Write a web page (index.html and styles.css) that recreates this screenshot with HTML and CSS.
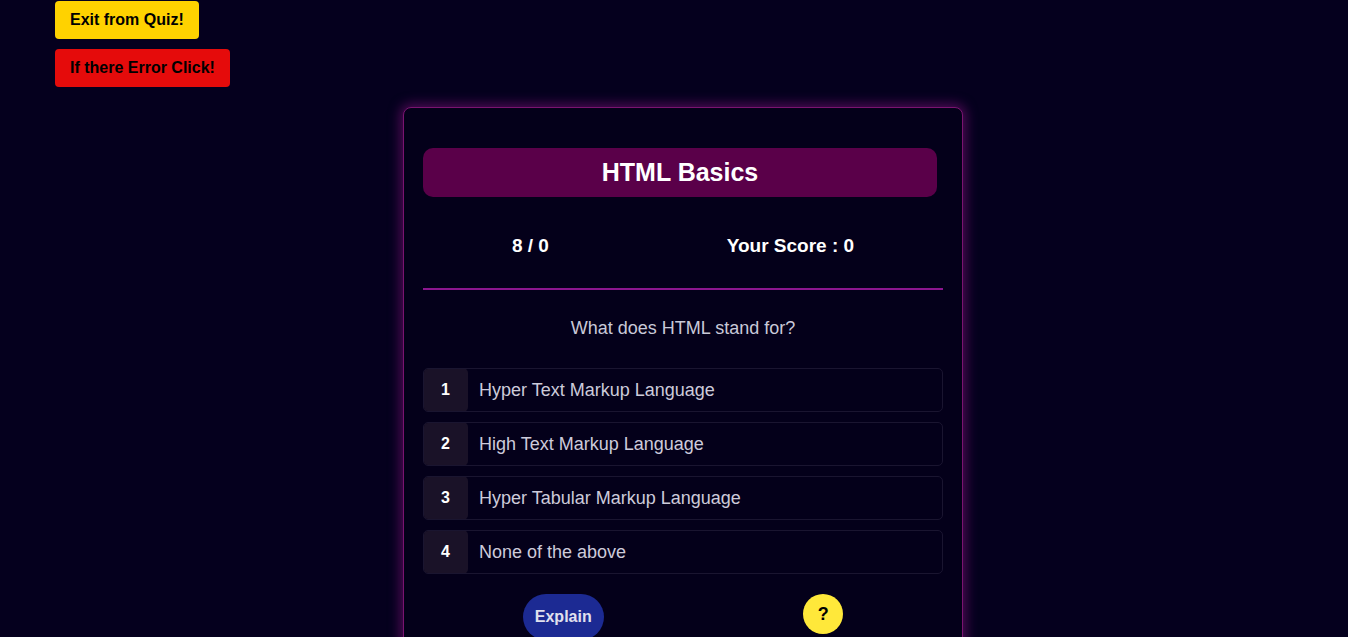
FILE: index.html
```html
<!DOCTYPE html>
<html>
<head>
<meta charset="utf-8">
<link rel="stylesheet" href="styles.css">
</head>
<body>
<div class="top-actions">
  <button class="btn btn-exit">Exit from Quiz!</button>
  <button class="btn btn-error">If there Error Click!</button>
</div>
<main class="card">
  <h1 class="title">HTML Basics</h1>
  <div class="stats">
    <span>8 / 0</span>
    <span>Your Score : 0</span>
  </div>
  <hr class="divider">
  <p class="question">What does HTML stand for?</p>
  <ul class="options">
    <li class="option"><span class="num">1</span><span class="text">Hyper Text Markup Language</span></li>
    <li class="option"><span class="num">2</span><span class="text">High Text Markup Language</span></li>
    <li class="option"><span class="num">3</span><span class="text">Hyper Tabular Markup Language</span></li>
    <li class="option"><span class="num">4</span><span class="text">None of the above</span></li>
  </ul>
  <div class="bottom">
    <button class="explain">Explain</button>
    <button class="help">?</button>
  </div>
</main>
</body>
</html>
```
FILE: styles.css
```css
* { box-sizing: border-box; }
html, body { margin: 0; padding: 0; }
body {
  background: #05001e;
  font-family: "Liberation Sans", Arial, sans-serif;
  height: 637px;
  overflow: hidden;
}
.top-actions {
  display: flex;
  flex-direction: column;
  align-items: flex-start;
  gap: 10px;
  padding: 1px 0 0 55px;
}
.btn {
  border: none;
  border-radius: 4px;
  height: 38px;
  padding: 0 15px;
  font-family: inherit;
  font-weight: bold;
  font-size: 16px;
  color: #000;
}
.btn-exit { background: #ffd200; }
.btn-error { background: #e50b0b; }
.card {
  width: 560px;
  margin: 20px 0 0 403px;
  background: #04001a;
  border-radius: 8px;
  border: 1px solid #7a1470;
  box-shadow: 0 0 12px 3px rgba(150, 20, 140, 0.5);
  padding: 40px 19px 40px;
}
.title {
  width: 514px;
  height: 49px;
  margin: 0;
  background: #5a0049;
  border-radius: 10px;
  color: #fff;
  font-size: 25px;
  font-weight: bold;
  display: flex;
  align-items: center;
  justify-content: center;
}
.stats {
  display: flex;
  justify-content: space-around;
  color: #fff;
  font-weight: bold;
  font-size: 19px;
  height: 91px;
  align-items: center;
  padding-top: 7px;
}
.divider {
  margin: 0;
  border: none;
  height: 2px;
  background: #8c168f;
}
.question {
  margin: 28px 0 0;
  text-align: center;
  color: #c9c9d8;
  font-size: 18px;
  line-height: 20px;
}
.options {
  list-style: none;
  margin: 30px 0 0;
  padding: 0;
  display: flex;
  flex-direction: column;
  gap: 10px;
}
.option {
  display: flex;
  height: 44px;
  border: 1px solid #1a1530;
  border-radius: 5px;
  overflow: hidden;
}
.num {
  width: 45px;
  margin: -1px 0 -1px -1px;
  background: #1a1228;
  border-radius: 5px;
  color: #fff;
  font-weight: bold;
  font-size: 16px;
  display: flex;
  align-items: center;
  justify-content: center;
}
.text {
  display: flex;
  align-items: center;
  padding-left: 11px;
  color: #cdcbda;
  font-size: 18px;
}
.bottom {
  display: flex;
  justify-content: space-around;
  margin-top: 20px;
}
.explain {
  width: 81px;
  height: 46px;
  border: none;
  border-radius: 23px;
  background: #1c2a93;
  color: #e0e0ee;
  font-family: inherit;
  font-weight: bold;
  font-size: 16px;
}
.help {
  width: 40px;
  height: 40px;
  border: none;
  border-radius: 50%;
  background: #ffe83a;
  color: #000;
  font-family: inherit;
  font-weight: bold;
  font-size: 18px;
}
```
